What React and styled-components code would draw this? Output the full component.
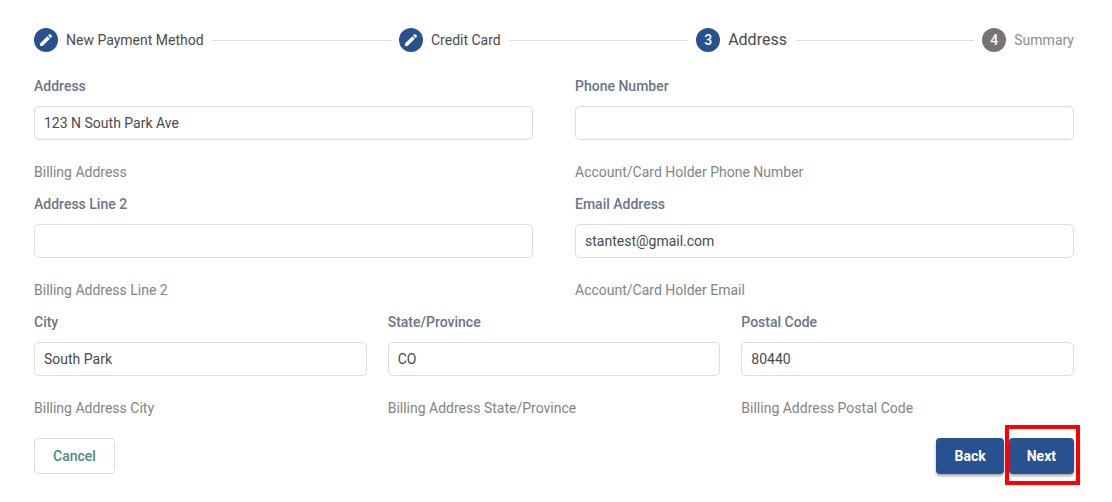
import React, { useState } from 'react'
import styled, { createGlobalStyle } from 'styled-components'

const steps = [
    { label: 'New Payment Method', state: 'done' },
    { label: 'Credit Card', state: 'done' },
    { label: 'Address', state: 'active' },
    { label: 'Summary', state: 'pending' },
]

const contactFields = [
    { id: 'address', label: 'Address', hint: 'Billing Address' },
    { id: 'phone', label: 'Phone Number', hint: 'Account/Card Holder Phone Number', type: 'tel' },
    { id: 'address2', label: 'Address Line 2', hint: 'Billing Address Line 2' },
    { id: 'email', label: 'Email Address', hint: 'Account/Card Holder Email', type: 'email' },
]

const regionFields = [
    { id: 'city', label: 'City', hint: 'Billing Address City' },
    { id: 'state', label: 'State/Province', hint: 'Billing Address State/Province' },
    { id: 'postal', label: 'Postal Code', hint: 'Billing Address Postal Code' },
]

function PencilIcon() {
    return (
        <svg width="16" height="16" viewBox="0 0 24 24" fill="currentColor" aria-hidden="true">
            <path d="M3 17.25V21h3.75L17.81 9.94l-3.75-3.75L3 17.25zM20.71 7.04a.996.996 0 0 0 0-1.41l-2.34-2.34a.996.996 0 0 0-1.41 0l-1.83 1.83 3.75 3.75 1.83-1.83z" />
        </svg>
    )
}

function Field({ field, value, onChange }) {
    return (
        <FieldContainer>
            <Label htmlFor={field.id}>{field.label}</Label>
            <Input
                id={field.id}
                name={field.id}
                type={field.type || 'text'}
                aria-describedby={`${field.id}-hint`}
                value={value}
                onChange={onChange}
            />
            <Hint id={`${field.id}-hint`}>{field.hint}</Hint>
        </FieldContainer>
    )
}

function App() {
    const [values, setValues] = useState({
        address: '123 N South Park Ave',
        phone: '',
        address2: '',
        email: 'stantest@gmail.com',
        city: 'South Park',
        state: 'CO',
        postal: '80440',
    })

    const handleChange = (e) => {
        setValues({ ...values, [e.target.name]: e.target.value })
    }

    const renderField = (field) => (
        <Field key={field.id} field={field} value={values[field.id]} onChange={handleChange} />
    )

    return (
        <>
            <GlobalStyle />
            <Page>
                <Stepper>
                    {steps.map((step, i) => (
                        <React.Fragment key={step.label}>
                            {i > 0 && <StepLine role="presentation" />}
                            <Step aria-current={step.state === 'active' ? 'step' : undefined}>
                                <StepIcon $state={step.state}>
                                    {step.state === 'done' ? <PencilIcon /> : i + 1}
                                </StepIcon>
                                <StepLabel $state={step.state}>{step.label}</StepLabel>
                            </Step>
                        </React.Fragment>
                    ))}
                </Stepper>
                <Form onSubmit={(e) => e.preventDefault()}>
                    <FieldGrid $columns={2} $gap={42}>
                        {contactFields.map(renderField)}
                    </FieldGrid>
                    <FieldGrid $columns={3} $gap={21}>
                        {regionFields.map(renderField)}
                    </FieldGrid>
                    <Actions>
                        <CancelButton type="button">Cancel</CancelButton>
                        <ActionsRight>
                            <PrimaryButton type="button">Back</PrimaryButton>
                            <Highlight>
                                <PrimaryButton type="submit">Next</PrimaryButton>
                            </Highlight>
                        </ActionsRight>
                    </Actions>
                </Form>
            </Page>
        </>
    )
}

export default App

const GlobalStyle = createGlobalStyle`
    * {
        box-sizing: border-box;
    }

    body {
        margin: 0;
        background: #fff;
        font-family: Roboto, "Liberation Sans", sans-serif;
        font-size: 14px;
        line-height: 20px;
    }
`;

const Page = styled.main`
    padding: 28px 38px 28px 34px;
`;

const Stepper = styled.ol`
    display: flex;
    align-items: center;
    gap: 8px;
    margin: 0 0 24px;
    padding: 0;
    list-style: none;
`;

const Step = styled.li`
    display: flex;
    align-items: center;
    gap: 8px;
`;

const StepLine = styled.li`
    flex: 1;
    height: 1px;
    background: #dedede;
`;

const StepIcon = styled.span`
    display: flex;
    align-items: center;
    justify-content: center;
    width: 24px;
    height: 24px;
    border-radius: 50%;
    color: #fff;
    background: ${({ $state }) => ($state === 'pending' ? '#757575' : '#27528f')};
    font-weight: 500;
`;

const StepLabel = styled.span`
    color: ${({ $state }) => ($state === 'pending' ? '#8c8c8c' : '#4a4a4a')};
    font-size: ${({ $state }) => ($state === 'active' ? '16px' : '14px')};
`;

const Form = styled.form`
    display: flex;
    flex-direction: column;
    gap: 12px;
`;

const FieldGrid = styled.div`
    display: grid;
    grid-template-columns: repeat(${({ $columns }) => $columns}, minmax(0, 1fr));
    column-gap: ${({ $gap }) => $gap}px;
    row-gap: 12px;
`;

const FieldContainer = styled.div`
    display: flex;
    flex-direction: column;
`;

const Label = styled.label`
    margin-bottom: 10px;
    color: #6b7686;
    font-weight: 500;
`;

const Input = styled.input`
    width: 100%;
    height: 34px;
    padding: 0 9px;
    border: 1px solid #dcdcdc;
    border-radius: 5px;
    background: #fff;
    color: #4a4a4a;
    font: inherit;

    &:focus {
        outline: none;
        border-color: #27528f;
    }
`;

const Hint = styled.span`
    margin-top: 22px;
    color: #848484;
`;

const Actions = styled.div`
    display: flex;
    justify-content: space-between;
    margin-top: 8px;
`;

const ActionsRight = styled.div`
    display: flex;
    gap: 5px;
`;

const Button = styled.button`
    height: 36px;
    border-radius: 4px;
    font: inherit;
    cursor: pointer;
`;

const CancelButton = styled(Button)`
    padding: 0 18px;
    border: 1px solid #dcdcdc;
    background: #fff;
    color: #4b8c88;
    font-weight: 500;
`;

const PrimaryButton = styled(Button)`
    padding: 0 18px;
    border: none;
    background: #27528f;
    color: #fff;
    font-weight: 700;
    box-shadow: 0 2px 3px rgba(0, 0, 0, 0.35);
`;

const Highlight = styled.div`
    position: relative;

    &::after {
        content: "";
        position: absolute;
        top: -13px;
        right: -6px;
        bottom: -11px;
        left: -4px;
        border: 4px solid #f00;
        pointer-events: none;
    }
`;
